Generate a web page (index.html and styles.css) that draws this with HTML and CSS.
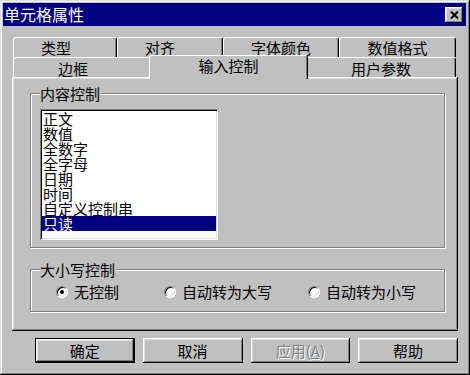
FILE: index.html
```html
<!DOCTYPE html>
<html lang="zh-CN">
<head>
  <meta charset="UTF-8" />
  <meta name="viewport" content="width=device-width, initial-scale=1" />
  <title>单元格属性</title>
  <link rel="stylesheet" href="styles.css">
</head>
<body>

  <div class="window">
    <div class="titlebar">
      <span class="title">单元格属性</span>
      <button class="close-btn" aria-label="关闭">
        <svg width="9" height="8" viewBox="0 0 9 8"><path d="M1 0.5 L8 7.5 M8 0.5 L1 7.5" stroke="#000" stroke-width="2" fill="none"/></svg>
      </button>
    </div>

    <div class="dialog">
      <div class="tabs">
        <div class="tab-row">
          <div class="tab tab-type">类型</div>
          <div class="tab tab-align">对齐</div>
          <div class="tab tab-font">字体颜色</div>
          <div class="tab tab-number">数值格式</div>
        </div>
        <div class="tab-row front">
          <div class="tab tab-border">边框</div>
          <div class="tab tab-input active">输入控制</div>
          <div class="tab tab-user">用户参数</div>
        </div>
      </div>

      <div class="panel">
        <div class="group group-content">
          <span class="group-label">内容控制</span>
          <ul class="listbox">
            <li>正文</li>
            <li>数值</li>
            <li>全数字</li>
            <li>全字母</li>
            <li>日期</li>
            <li>时间</li>
            <li>自定义控制串</li>
            <li class="selected">只读</li>
          </ul>
        </div>

        <div class="group group-case">
          <span class="group-label">大小写控制</span>
          <div class="radio-row">
            <label class="radio"><span class="radio-dot checked"></span>无控制</label>
            <label class="radio"><span class="radio-dot"></span>自动转为大写</label>
            <label class="radio"><span class="radio-dot"></span>自动转为小写</label>
          </div>
        </div>
      </div>

      <div class="buttons">
        <button class="btn default">确定</button>
        <button class="btn">取消</button>
        <button class="btn" disabled>应用(<u>A</u>)</button>
        <button class="btn">帮助</button>
      </div>
    </div>
  </div>

</body>
</html>
```

FILE: styles.css
```css
body {
  margin: 0;
  font-family: "Noto Sans CJK SC", sans-serif;
  font-size: 15px;
  background: #c0c0c0;
  color: #000;
}

.window {
  width: 470px;
  height: 375px;
  box-sizing: border-box;
  padding: 3px;
  background: #c0c0c0;
  box-shadow:
    inset -1px -1px 0 #000,
    inset 1px 1px 0 #dfdfdf,
    inset -2px -2px 0 #808080,
    inset 2px 2px 0 #fff;
}

.titlebar {
  display: flex;
  align-items: center;
  justify-content: space-between;
  height: 23px;
  margin-right: 1px;
  background: #000080;
  color: #fff;
}

.title {
  font-size: 16px;
  line-height: 23px;
  padding-left: 1px;
}

.close-btn {
  display: flex;
  align-items: center;
  justify-content: center;
  width: 18px;
  height: 16px;
  margin-right: 3px;
  padding: 0;
  border: none;
  background: #c0c0c0;
  box-shadow:
    inset -1px -1px 0 #000,
    inset 1px 1px 0 #fff,
    inset -2px -2px 0 #808080,
    inset 2px 2px 0 #dfdfdf;
}

.dialog {
  padding: 11px 9px 0 9px;
}

/* tabs */
.tab-row {
  display: flex;
  align-items: flex-start;
  height: 20px;
  padding-left: 1px;
}

.tab {
  box-sizing: border-box;
  height: 20px;
  line-height: 19px;
  text-align: center;
  background: #c0c0c0;
  border-top: 1px solid #fff;
  border-left: 1px solid #fff;
  border-right: 1px solid #000;
  border-radius: 3px 3px 0 0;
  box-shadow: inset -1px 0 0 #808080;
}

.tab-type { width: 104px; padding-right: 18px; }
.tab-align { width: 106px; padding-right: 20px; }
.tab-font { width: 116px; }
.tab-number { width: 117px; }

.front .tab {
  line-height: 22px;
}

.tab-border { width: 138px; padding-right: 18px; }
.tab-user { width: 150px; }

.tab-input {
  width: 159px;
  margin: -2px -2px 0;
}

.tab.active {
  position: relative;
  z-index: 1;
  height: 24px;
  line-height: 20px;
}

/* panel */
.panel {
  box-sizing: border-box;
  height: 254px;
  padding: 16px 0 0 18px;
  box-shadow:
    inset -1px -1px 0 #000,
    inset 1px 1px 0 #fff,
    inset -2px -2px 0 #808080,
    inset 2px 2px 0 #dfdfdf;
}

.group {
  box-sizing: border-box;
  width: 415px;
  padding-left: 9px;
  border: 1px solid #808080;
  box-shadow: inset 1px 1px 0 #fff, 1px 1px 0 #fff;
}

.group-label {
  display: block;
  width: max-content;
  height: 15px;
  margin-top: -8px;
  padding: 0 1px 0 0;
  line-height: 15px;
  background: #c0c0c0;
}

.group-content {
  height: 155px;
}

.listbox {
  box-sizing: border-box;
  width: 178px;
  height: 131px;
  margin: 8px 0 0;
  padding: 2px;
  list-style: none;
  background: #fff;
  box-shadow:
    inset 1px 1px 0 #808080,
    inset -1px -1px 0 #fff,
    inset 2px 2px 0 #000,
    inset -2px -2px 0 #dfdfdf;
}

.listbox li {
  height: 15px;
  line-height: 15px;
  padding-left: 1px;
  white-space: nowrap;
}

.listbox li.selected {
  background: #000080;
  color: #fff;
}

.group-case {
  height: 43px;
  margin-top: 21px;
}

.radio-row {
  display: grid;
  grid-template-columns: 108px 144px auto;
  align-items: center;
  height: 16px;
  margin-top: 7px;
  padding-left: 16px;
}

.radio {
  display: flex;
  align-items: center;
  gap: 6px;
  line-height: 16px;
}

.radio-dot {
  position: relative;
  box-sizing: border-box;
  width: 12px;
  height: 12px;
  border-radius: 50%;
  background: #fff;
  border: 1px solid;
  border-color: #808080 #fff #fff #808080;
  box-shadow: inset 1px 1px 0 #000, inset -1px -1px 0 #dfdfdf;
}

.radio-dot.checked::after {
  content: "";
  position: absolute;
  top: 3px;
  left: 3px;
  width: 4px;
  height: 4px;
  border-radius: 50%;
  background: #000;
}

/* buttons */
.buttons {
  display: flex;
  gap: 8px;
  margin-top: 7px;
  padding-left: 23px;
}

.btn {
  box-sizing: border-box;
  width: 100px;
  height: 25px;
  padding: 0;
  font-family: inherit;
  font-size: 15px;
  line-height: 23px;
  color: #000;
  background: #c0c0c0;
  border: none;
  box-shadow:
    inset -1px -1px 0 #000,
    inset 1px 1px 0 #fff,
    inset -2px -2px 0 #808080,
    inset 2px 2px 0 #dfdfdf;
}

.btn.default {
  border: 1px solid #000;
}

.btn:disabled {
  color: #808080;
  text-shadow: 1px 1px 0 #fff;
}
```
